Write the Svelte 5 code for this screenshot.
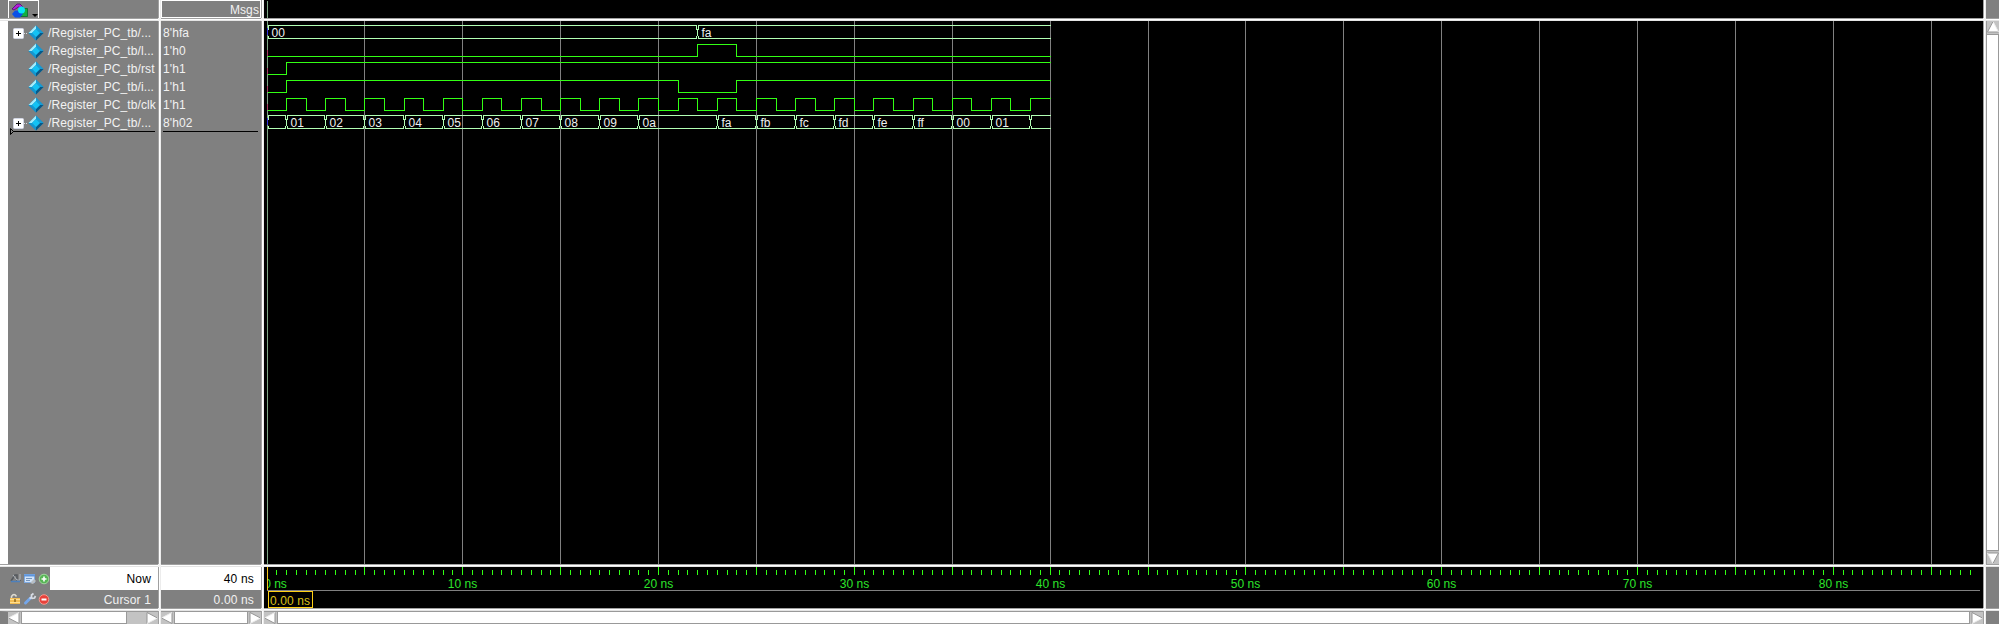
<script>
  const px = (t) => Math.floor(267 + 19.578 * t) - 264 + 0.5;
  const names = ['/Register_PC_tb/...', '/Register_PC_tb/l...', '/Register_PC_tb/rst', '/Register_PC_tb/i...', '/Register_PC_tb/clk', '/Register_PC_tb/...'];
  const values = ["8'hfa", "1'h0", "1'h1", "1'h1", "1'h1", "8'h02"];
  const end = 40;

  const clk = [];
  for (let t = 1; t < end; t++) clk.push(t);
  const signals = [
    { row: 1, start: 0, edges: [22, 24] },
    { row: 2, start: 0, edges: [1] },
    { row: 3, start: 0, edges: [1, 21, 24] },
    { row: 4, start: 0, edges: clk }
  ];
  const buses = [
    { row: 0, segs: [[0, '00'], [22, 'fa']] },
    { row: 5, segs: [[0, ''], [1, '01'], [3, '02'], [5, '03'], [7, '04'], [9, '05'], [11, '06'], [13, '07'], [15, '08'], [17, '09'], [19, '0a'], [23, 'fa'], [25, 'fb'], [27, 'fc'], [29, 'fd'], [31, 'fe'], [33, 'ff'], [35, '00'], [37, '01'], [39, '']] }
  ];

  function wave(s) {
    const hi = 5.5 + 18 * s.row;
    const lo = hi + 12;
    let level = s.start;
    let d = `M${px(0)} ${level ? hi : lo}`;
    for (const e of s.edges) {
      level = 1 - level;
      d += `H${px(e)}V${level ? hi : lo}`;
    }
    return d + `H${px(end) + 0.5}`;
  }

  function busPath(b) {
    const t = 4.5 + 18 * b.row;
    const bo = t + 13;
    let d = '';
    b.segs.forEach(([at], i) => {
      const x = px(at);
      const last = i === b.segs.length - 1;
      const nx = last ? px(end) + 0.5 : px(b.segs[i + 1][0]) - 1;
      d += `M${x + 1} ${t + 4}V${t}H${nx}` + (last ? '' : `v4`);
      d += `M${x + 1} ${bo - 3}V${bo}H${nx}` + (last ? '' : `v-3`);
      if (i) d += `M${x} ${t + 3}V${bo - 3}`;
    });
    return d;
  }

  const grid = Array.from({ length: 17 }, (_, i) => (i + 1) * 5);
  const ticks = Array.from({ length: 177 }, (_, i) => (i + 1) / 2).filter((t) => px(t) < 1708);
  const labels = [0, 10, 20, 30, 40, 50, 60, 70, 80];
</script>

{#snippet gem()}
  <svg class="gem" width="16" height="16" viewBox="0 0 16 16">
    <path d="M8 0.5L15.5 8 8 15.5 0.5 8z" fill="#1283bd" />
    <path d="M8 0.5L8 4 4 8H0.5z" fill="#a5ecfb" />
    <path d="M8 0.5V4l4 4h3.5z" fill="#189bd3" />
    <path d="M0.5 8H4l4 4v3.5z" fill="#1695ce" />
    <path d="M15.5 8H12l-4 4v3.5z" fill="#075887" />
    <path d="M8 4l4 4-4 4-4-4z" fill="#13c2f4" />
  </svg>
{/snippet}

{#snippet arrow(dir)}
  <svg class="arrow" width="12" height="12" viewBox="0 0 12 12">
    <g transform="rotate({dir} 6 6)">
      <path d="M0.5 6L11 0.5V11.5z" fill="#fff" />
      <path d="M0.5 6L11 11.5V0.5" fill="none" stroke="#959595" />
      <path d="M0.5 6L11 0.5" stroke="#eee" />
    </g>
  </svg>
{/snippet}

<div class="app">
  <div class="head tools">
    <div class="toolbtn">
      <svg width="30" height="18" viewBox="0 0 30 18">
        <path d="M12.500 8.500H18.500V16.500H11z" fill="#14b040" stroke="#0a6a2c" stroke-width=".8" />
        <path d="M3 9L8 4h3l5 5-2.500 1.500L9.500 7 5 10z" fill="#b41edc" stroke="#4d0a66" stroke-width=".8" />
        <path d="M3 14l3-3.500h5l3 3.500-3 3.500H6z" fill="#0a50e6" />
        <circle cx="12.500" cy="10" r="3.500" fill="#08e5f5" />
        <path d="M23 14h6l-3 3z" fill="#000" />
      </svg>
    </div>
  </div>
  <i class="v"></i>
  <div class="head msgs">Msgs</div>
  <i class="v"></i>
  <div class="black"><svg width="1719" height="18"><path d="M3.5 1V18" stroke="#7ba383" /></svg></div>
  <i class="v"></i>
  <div></div>

  <i class="h"></i><i class="x"></i><i class="h"></i><i class="x"></i><i class="h"></i><i class="x"></i><i class="h"></i>

  <div class="names">
    {#each names as n, i}
      <div class="name">
        <span class="exp">
          {#if i === 0 || i === 5}
            <svg width="15" height="12" viewBox="0 0 15 12">
              <rect x=".5" y=".5" width="10" height="10" rx="1" fill="#fff" stroke="#d2d6e4" />
              <path d="M3 5.5h5M5.5 3v5" stroke="#000" />
              <path d="M11 5.5h4" stroke="#ddd" stroke-dasharray="1 1" />
            </svg>
          {/if}
        </span>
        {@render gem()}
        <span class="txt">{n}</span>
      </div>
    {/each}
    <svg class="endline" width="150" height="8"><path d="M2.5 .5v6l3-3z" fill="none" stroke="#000" /><path d="M5 3.5H147" stroke="#000" /></svg>
  </div>
  <i class="v"></i>
  <div class="values">
    {#each values as v}<div class="val">{v}</div>{/each}
    <svg class="endline" width="100" height="8"><path d="M2 3.5H97" stroke="#000" /></svg>
  </div>
  <i class="v"></i>
  <div class="black">
    <svg width="1719" height="543" shape-rendering="crispEdges">
      {#each grid as g}<path d="M{px(g)} 0V543" stroke="#808080" />{/each}
      {#each signals as s}<path d={wave(s)} fill="none" stroke="#32ff14" />{/each}
      {#each buses as b}
        <path d={busPath(b)} fill="none" stroke="#b2ffb4" />
        {#each b.segs as [t, label]}<text x={px(t) + 4} y={16 + 18 * b.row} fill="#f0f0f0">{label}</text>{/each}
      {/each}
      <path d="M3.5 0V543" stroke="#7ba383" />
      <path d="M3.5 7V14M3.5 97V104" stroke="#3030e0" />
      <path d="M3.5 29V35M3.5 47V53M3.5 65V71M3.5 83V89" stroke="#a83860" />
    </svg>
  </div>
  <i class="v"></i>
  <div class="bar vert">{@render arrow(90)}<b></b>{@render arrow(-90)}</div>

  <i class="h"></i><i class="x"></i><i class="h"></i><i class="x"></i><i class="h"></i><i class="x"></i><i class="h"></i>

  <div class="foot">
    <div class="now">
      <svg width="50" height="23" viewBox="0 0 50 23">
        <path d="M11 14l4-6h2v5h4" fill="none" stroke="#55595e" stroke-width="1.6" />
        <path d="M13 8l4 5h3V7" fill="none" stroke="#b4bac0" />
        <path d="M11 14.5h9" stroke="#4c80bd" stroke-width="1.5" />
        <rect x="24.5" y="7.500" width="10" height="8" fill="#d3e4f8" stroke="#7faae0" />
        <path d="M24 8.500h11" stroke="#5f96dd" stroke-width="2" />
        <path d="M26 11.500h6M26 13.500h4" stroke="#7495be" />
        <path d="M30 16l4-4 2 2-3 3z" fill="#b8bec4" />
        <circle cx="44" cy="12" r="4.800" fill="#58b556" stroke="#a2d89f" />
        <path d="M41.500 12h5M44 9.500v5" stroke="#fff" stroke-width="1.600" />
      </svg>
      <span>Now</span>
    </div>
    <div class="cur">
      <svg width="50" height="18" viewBox="0 0 50 18">
        <path d="M11.500 9V6.500q2.500-4 5 0" fill="none" stroke="#dedbd0" stroke-width="1.500" />
        <rect x="10" y="8" width="10" height="6" fill="#f3bd53" />
        <path d="M10 9.500h10M10 12.500h10" stroke="#ffdf91" />
        <path d="M15 9v3" stroke="#8e671d" stroke-width="1.500" />
        <path d="M25.500 13l5-5" stroke="#74a6ea" stroke-width="3" stroke-linecap="round" />
        <path d="M29.500 8.500l2-1V5l2-1.500M31.500 8.500l3-.5 1-2" fill="none" stroke="#d8dce4" stroke-width="1.700" />
        <circle cx="44" cy="9.500" r="4.800" fill="#e8423b" stroke="#f39a90" />
        <path d="M41.500 9.500h5" stroke="#fff" stroke-width="2" />
      </svg>
      <span>Cursor 1</span>
    </div>
  </div>
  <i class="v"></i>
  <div class="foot">
    <div class="now"><span>40 ns</span></div>
    <div class="cur"><span>0.00 ns</span></div>
  </div>
  <i class="v"></i>
  <div class="black">
    <svg width="1719" height="41" shape-rendering="crispEdges">
      {#each ticks as t}<path d="M{px(t)} {t % 5 ? 3 : 0}V8" stroke="#32ff14" />{/each}
      <svg x="3" width="1716" height="41">
        {#each labels as t}<text class="time" x={t ? px(t) - 3 : 8.5} y="21" fill="#2de52b" text-anchor="middle">{t} ns</text>{/each}
      </svg>
      <path d="M3 23.500H1716" stroke="#808080" />
      <path d="M3.500 0V23" stroke="#f5c518" />
      <rect x="4.500" y="24.500" width="44" height="16" fill="#000" stroke="#ffd014" />
      <text x="6" y="37.500" fill="#ddc018" textLength="40">0.00 ns</text>
    </svg>
  </div>
  <i class="v"></i>
  <div></div>

  <i class="h"></i><i class="x"></i><i class="h"></i><i class="x"></i><i class="h"></i><i class="x"></i><i class="h"></i>

  <div class="bar first">{@render arrow(0)}<b></b><u></u>{@render arrow(180)}</div>
  <i class="v"></i>
  <div class="bar">{@render arrow(0)}<b></b>{@render arrow(180)}</div>
  <i class="v"></i>
  <div class="bar">{@render arrow(0)}<b></b>{@render arrow(180)}</div>
  <i class="v"></i>
  <div></div>
</div>

<style>
  :global(body) { margin: 0; background: #808080; overflow: hidden; }
  .app {
    width: 1999px; height: 624px; display: grid;
    grid-template-columns: 158px 3px 100px 3px 1719px 3px 13px;
    grid-template-rows: 18px 3px 543px 3px 41px 3px 13px;
    background: #808080; color: #f2f2f2;
    font: 12px "Liberation Sans", Arial, sans-serif;
  }
  .app > * { min-width: 0; min-height: 0; overflow: hidden; box-sizing: border-box; }
  svg { display: block; flex: none; }
  svg text { font: 12px "Liberation Sans", Arial, sans-serif; }
  .v { background: linear-gradient(90deg, #a0a0a0 0 1px, #fff 1px 2px, #ececec 2px); }
  .h { background: linear-gradient(#a0a0a0 0 1px, #fff 1px 2px, #e4e4e4 2px); }
  .x { background: #f2f2f2; }
  .black { background: #000; }
  .tools { padding-left: 8px; }
  .toolbtn { width: 31px; height: 18px; box-sizing: border-box; border: 1px solid #fff; border-bottom: 0; }
  .toolbtn svg { margin-top: -1px; }
  .msgs { border: 1px solid #fff; text-align: right; padding-right: 1px; line-height: 18px; letter-spacing: .1px; }
  .names { border-left: 8px solid #fff; padding-top: 3px; }
  .name { height: 18px; display: flex; align-items: center; white-space: nowrap; }
  .exp { width: 15px; margin-left: 5px; height: 11px; }
  .gem { margin-top: -1px; }
  .txt { margin-left: 4px; letter-spacing: .1px; }
  .endline { margin-top: -4px; }
  .values { padding-top: 3px; }
  .val { height: 18px; line-height: 18px; padding-left: 2px; letter-spacing: .1px; }
  .now, .cur { display: flex; justify-content: space-between; }
  .now { height: 23px; line-height: 24px; }
  .now span { flex: 1; background: #fff; color: #000; text-align: right; padding-right: 7px; letter-spacing: .2px; }
  .cur { height: 18px; line-height: 20px; }
  .cur span { flex: 1; text-align: right; padding-right: 7px; letter-spacing: .15px; }
  .bar { display: flex; background: #c3c3c3; border-top: 1px solid #999; }
  .bar b { flex: 1; background: #fff; border: 1px solid #999; border-top: 0; margin: 0 1px; }
  .bar.first { border-left: 8px solid #808080; }
  .bar.first b { flex: 0 0 106px; box-sizing: border-box; }
  .bar u { flex: 1; }
  .vert { flex-direction: column; border-top: 0; border-left: 1px solid #999; }
  .vert b { border: 1px solid #999; border-left: 0; margin: 1px 0; }
</style>
